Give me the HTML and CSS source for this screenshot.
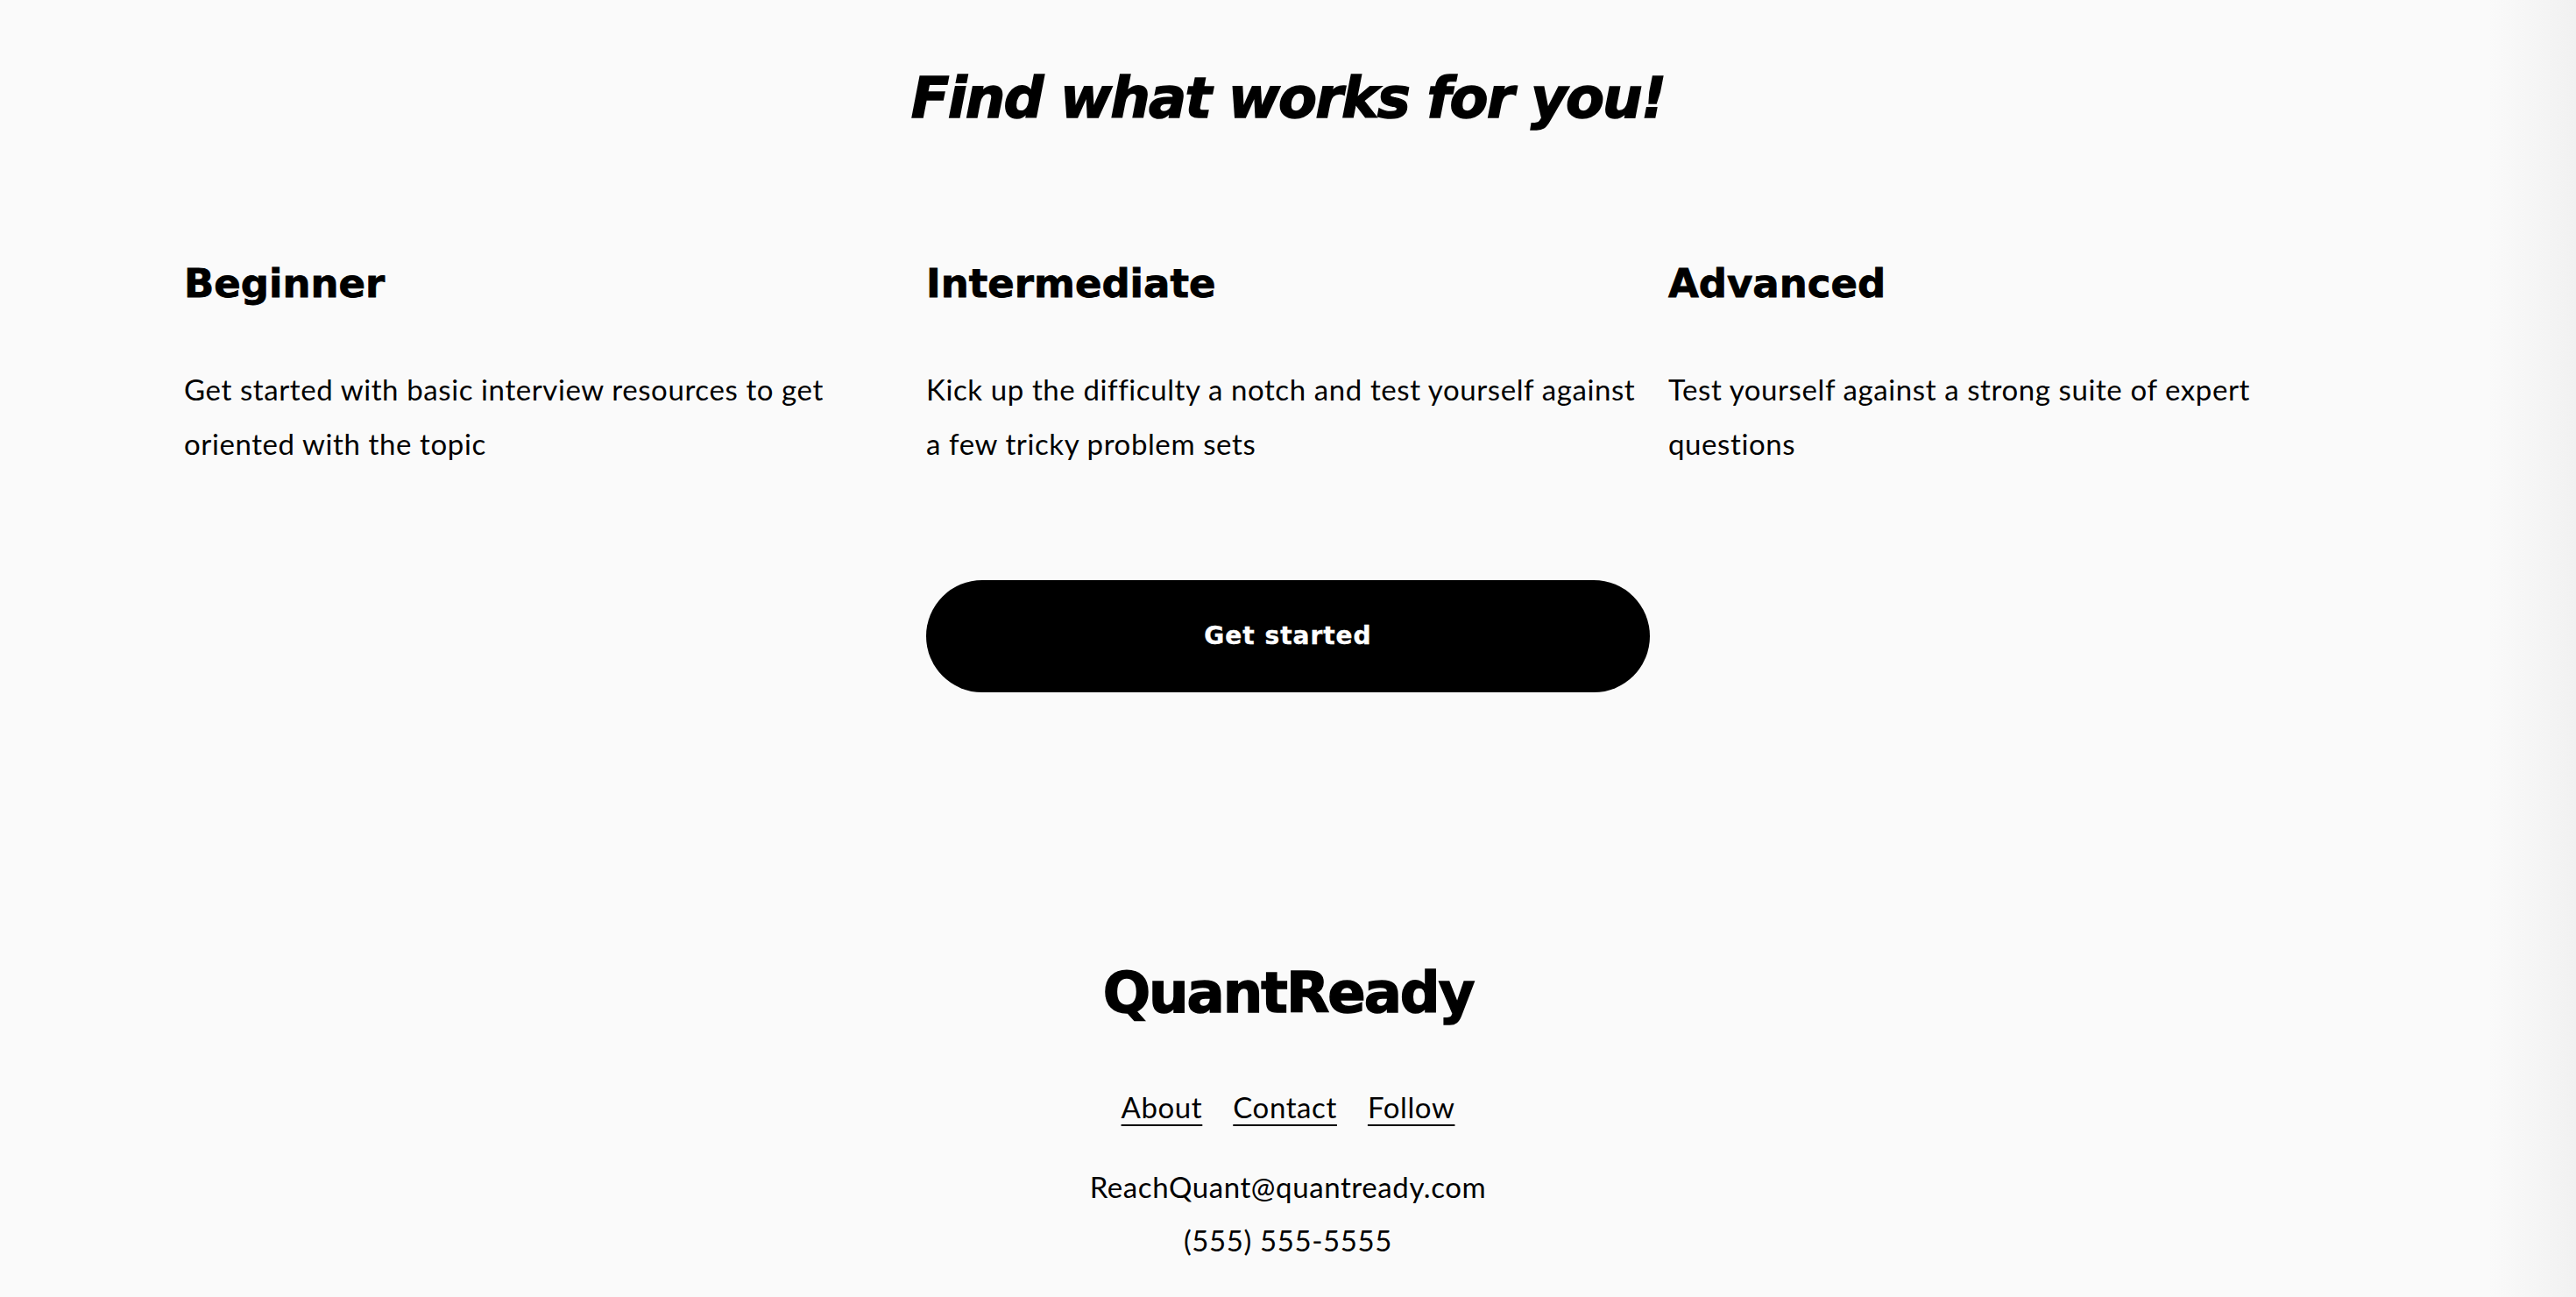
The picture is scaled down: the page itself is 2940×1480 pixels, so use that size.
FILE: index.html
```html
<!DOCTYPE html>
<html lang="en">
<head>
<meta charset="utf-8">
<title>QuantReady</title>
<link rel="stylesheet" href="styles.css">
</head>
<body>
<main class="page">
  <section class="offerings">
    <h2 class="offerings-title">Find what works for you!</h2>
    <div class="levels">
      <div class="level">
        <h3 class="level-title">Beginner</h3>
        <p class="level-text">Get started with basic interview resources to get oriented with the topic</p>
      </div>
      <div class="level">
        <h3 class="level-title">Intermediate</h3>
        <p class="level-text">Kick up the difficulty a notch and test yourself against a few tricky problem sets</p>
      </div>
      <div class="level">
        <h3 class="level-title">Advanced</h3>
        <p class="level-text level-text-narrow">Test yourself against a strong suite of expert questions</p>
      </div>
      <a class="cta" href="#">Get started</a>
    </div>
  </section>
  <footer class="footer">
    <div class="brand">QuantReady</div>
    <nav class="footer-nav">
      <a href="#">About</a>
      <a href="#">Contact</a>
      <a href="#">Follow</a>
    </nav>
    <div class="contact">
      <div>ReachQuant@quantready.com</div>
      <div>(555) 555-5555</div>
    </div>
  </footer>
</main>
</body>
</html>
```
FILE: styles.css
```css
html, body {
  margin: 0;
  padding: 0;
}
body {
  background: linear-gradient(to right, #fafafa 0, #fafafa calc(100% - 100px), #f1f1f1 100%);
  color: #000;
  font-family: "Lato", "Open Sans", sans-serif;
  min-height: 1480px;
}
.page {
  display: flex;
  flex-direction: column;
}
.offerings {
  padding-top: 74px;
  display: flex;
  flex-direction: column;
  align-items: center;
}
.offerings-title {
  margin: 0;
  font-family: "DejaVu Sans", sans-serif;
  font-weight: 700;
  font-style: italic;
  font-size: 64px;
  line-height: 1.2;
  letter-spacing: -1.8px;
  -webkit-text-stroke: 1.5px #000;
}
.levels {
  margin-top: 146px;
  display: grid;
  grid-template-columns: repeat(3, 826px);
  column-gap: 21px;
  justify-content: center;
}
.level-title {
  margin: 0;
  font-family: "DejaVu Sans", sans-serif;
  font-weight: 700;
  font-size: 45px;
  line-height: 54px;
  -webkit-text-stroke: 0.8px #000;
}
.level-text {
  margin: 62px 0 0;
  font-size: 33px;
  line-height: 62px;
  letter-spacing: 0.6px;
}
.level-text-narrow {
  max-width: 720px;
}
.cta {
  grid-column: 2;
  margin-top: 125px;
  height: 128px;
  border-radius: 64px;
  background: #000;
  color: #fff;
  text-decoration: none;
  display: flex;
  align-items: center;
  justify-content: center;
  font-family: "DejaVu Sans", sans-serif;
  font-weight: 700;
  font-size: 28px;
  letter-spacing: 1px;
  -webkit-text-stroke: 0.4px #fff;
}
.footer {
  margin-top: 305px;
  display: flex;
  flex-direction: column;
  align-items: center;
}
.brand {
  font-family: "DejaVu Sans", sans-serif;
  font-weight: 700;
  font-size: 64px;
  line-height: 1.2;
  letter-spacing: -2px;
  -webkit-text-stroke: 1.5px #000;
}
.footer-nav {
  margin-top: 60px;
  display: flex;
  gap: 35px;
  font-size: 33px;
  line-height: 62px;
  letter-spacing: 0.6px;
}
.footer-nav a {
  color: #000;
  text-decoration: underline;
  text-decoration-thickness: 2px;
  text-underline-offset: 7px;
}
.contact {
  margin-top: 30px;
  font-size: 33px;
  line-height: 61px;
  letter-spacing: 0.6px;
  text-align: center;
}
```
